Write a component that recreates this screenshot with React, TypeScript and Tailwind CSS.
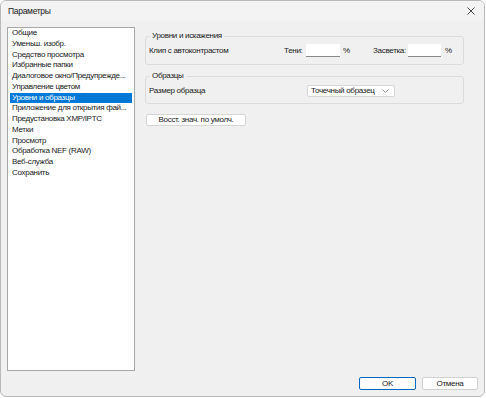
import { useState } from 'react';

const items = [
  'Общие',
  'Уменьш. изобр.',
  'Средство просмотра',
  'Избранные папки',
  'Диалоговое окно/Предупрежде...',
  'Управление цветом',
  'Уровни и образцы',
  'Приложение для открытия фай...',
  'Предустановка XMP/IPTC',
  'Метки',
  'Просмотр',
  'Обработка NEF (RAW)',
  'Веб-служба',
  'Сохранить',
];

function GroupBox({ title, height, children }: { title: string; height: string; children: React.ReactNode }) {
  return (
    <div className={`relative border border-[#dcdcdc] rounded-[3px] pl-[3px] ${height}`}>
      <span className="absolute left-[4px] -top-[6px] px-[2px] bg-[#f0f0f0] leading-[10px]">{title}</span>
      {children}
    </div>
  );
}

export default function App() {
  const [selected, setSelected] = useState(6);

  return (
    <div
      className="w-[486px] h-[398px] bg-white text-[8px] tracking-[-0.3px] text-[#1a1a1a]"
      style={{ fontFamily: '"Liberation Sans", Arial, sans-serif' }}
    >
      <div className="w-[485px] h-[397px] flex flex-col border border-[#b9b9b9] rounded-[6px] overflow-hidden bg-[#f0f0f0]">
        <div className="h-[20px] shrink-0 flex items-center justify-between bg-[#f3f3f3] pl-[7px] pr-[8px]">
          <span className="text-[8.5px]">Параметры</span>
          <svg width="8" height="8" viewBox="0 0 8 8" className="mr-[1px]">
            <path d="M0.5 0.5 L7.5 7.5 M7.5 0.5 L0.5 7.5" stroke="#333" strokeWidth="0.9" />
          </svg>
        </div>

        <div className="flex flex-1 pl-[6px] pt-[6px]">
          <div className="w-[128px] h-[344px] bg-white border border-[#a8a8a8] px-[2px]">
            {items.map((it, i) => (
              <div
                key={it}
                onClick={() => setSelected(i)}
                className={`h-[10.77px] pl-[2px] leading-[10.77px] whitespace-nowrap overflow-hidden ${
                  i === selected ? 'bg-[#0078d7] text-white' : ''
                }`}
              >
                {it}
              </div>
            ))}
          </div>

          <div className="flex flex-col w-[319px] ml-[10px] pt-[9px]">
            <GroupBox title="Уровни и искажения" height="h-[29px]">
              <div className="flex items-center h-[13px] mt-[7px]">
                <span className="w-[135px]">Клип с автоконтрастом</span>
                <span className="w-[22px]">Тени:</span>
                <div className="w-[34px] h-[13px] bg-white border-b border-[#8a8a8a]" />
                <span className="ml-[3px] w-[30px]">%</span>
                <span className="w-[35px]">Засветка:</span>
                <div className="w-[33px] h-[13px] bg-white border-b border-[#8a8a8a]" />
                <span className="ml-[4px]">%</span>
              </div>
            </GroupBox>
            <div className="mt-[11px]">
              <GroupBox title="Образцы" height="h-[28px]">
                <div className="flex items-center h-[12px] mt-[8px]">
                  <span className="w-[158px]">Размер образца</span>
                  <div className="w-[88px] h-[12px] bg-white border border-[#d6d6d6] rounded-[2px] flex items-center justify-between pl-[3px] pr-[5px] whitespace-nowrap">
                    <span>Точечный образец</span>
                    <svg width="7" height="4" viewBox="0 0 7 4">
                      <path d="M0.5 0.5 L3.5 3.5 L6.5 0.5" stroke="#777" strokeWidth="0.8" fill="none" />
                    </svg>
                  </div>
                </div>
              </GroupBox>
            </div>
            <button className="mt-[10px] ml-[1px] w-[100px] h-[12px] bg-white border border-[#d6d6d6] rounded-[2px] leading-[10px] tracking-[-0.3px]">
              Восст. знач. по умолч.
            </button>
          </div>
        </div>

        <div className="flex justify-end gap-[6px] pr-[6px] pb-[6px]">
          <button className="w-[57px] h-[13px] bg-white border border-[#0067c0] rounded-[2px] leading-[10px]">OK</button>
          <button className="w-[56px] h-[13px] bg-white border border-[#d0d0d0] rounded-[2px] leading-[10px]">Отмена</button>
        </div>
      </div>
    </div>
  );
}
